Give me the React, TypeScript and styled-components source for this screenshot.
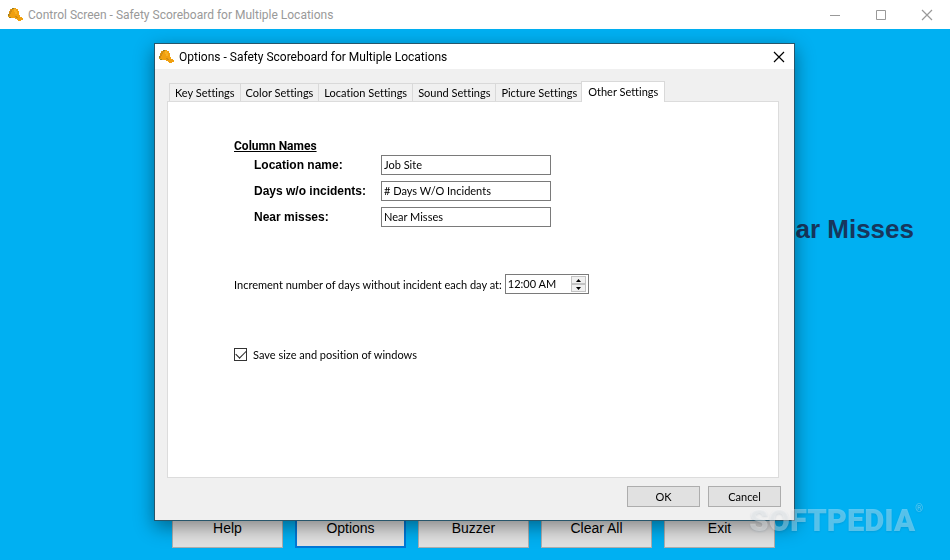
import React, { useState } from "react";
import styled, { createGlobalStyle } from "styled-components";

const GlobalStyle = createGlobalStyle`
  * { box-sizing: border-box; }
  html, body { margin: 0; height: 100%; overflow: hidden; }
  body {
    font-family: Lato, "Liberation Sans", Arial, sans-serif;
    font-size: 11px;
    font-variant-ligatures: none;
    color: #000;
  }
  button, input { font: inherit; font-variant-ligatures: none; color: inherit; margin: 0; }
  h1, h2, h3 { margin: 0; font-weight: 400; }
`;

const MainWindow = styled.div`
  min-height: 100vh;
  display: flex;
  flex-direction: column;
  background: #00b0f2;
`;

const TitleBar = styled.header<{ $main?: boolean }>`
  display: flex;
  align-items: center;
  flex: none;
  height: ${(p) => (p.$main ? 29 : 25)}px;
  padding-left: ${(p) => (p.$main ? 8 : 4)}px;
  gap: 5px;
  background: #fff;
  color: ${(p) => (p.$main ? "#999" : "#000")};
`;

const Title = styled.h1`
  flex: 1;
  font-family: Roboto, "Segoe UI", sans-serif;
  font-size: 12px;
  line-height: 16px;
  white-space: nowrap;
`;

const CaptionButtons = styled.div`
  display: flex;
`;

const CaptionButton = styled.button<{ $wide?: boolean }>`
  width: ${(p) => (p.$wide ? 46 : 31)}px;
  height: 24px;
  padding: 0;
  display: grid;
  place-items: center;
  border: 0;
  background: transparent;
`;

const Board = styled.main`
  flex: 1;
  display: flex;
  flex-direction: column;
  justify-content: space-between;
  padding: 185px 36px 12px;
`;

const BoardHeading = styled.h2`
  text-align: right;
  font-family: "Liberation Sans", Arial, sans-serif;
  font-size: 26px;
  line-height: 30px;
  font-weight: 700;
  color: #17365d;
`;

const ActionBar = styled.nav`
  display: flex;
  justify-content: center;
  gap: 12px;
  padding-right: 3px;
`;

const ActionButton = styled.button<{ $active?: boolean }>`
  width: 111px;
  height: 40px;
  padding: 0;
  font-family: "Liberation Sans", Arial, sans-serif;
  font-size: 14px;
  background: #e1e1e1;
  border: ${(p) => (p.$active ? "2px solid #0078d7" : "1px solid #adadad")};
`;

const Overlay = styled.div`
  position: fixed;
  inset: 0;
  display: flex;
  justify-content: center;
  align-items: flex-start;
  padding: 43px 1px 0 0;
`;

const Dialog = styled.section`
  width: 641px;
  max-width: 100%;
  border: 1px solid #27566b;
  background: #f0f0f0;
  box-shadow: 0 6px 18px rgba(0, 0, 0, 0.42);
`;

const DialogBody = styled.div`
  padding: 11px 15px 0 12px;
`;

const TabList = styled.div`
  display: flex;
  align-items: flex-end;
  padding-left: 2px;
  height: 21px;
`;

const Tab = styled.button<{ $selected: boolean }>`
  height: ${(p) => (p.$selected ? 21 : 18)}px;
  margin: ${(p) => (p.$selected ? "0 0 -1px -2px" : "0")};
  padding: ${(p) => (p.$selected ? "0 6px 2px" : "0 5px")};
  border: 1px solid #d9d9d9;
  border-left-width: ${(p) => (p.$selected ? 1 : 0)}px;
  border-bottom: 0;
  background: ${(p) => (p.$selected ? "#fff" : "#f0f0f0")};
  white-space: nowrap;
  &:first-child { border-left-width: 1px; }
`;

const TabPanel = styled.div`
  height: 377px;
  padding: 36px 66px 0;
  border: 1px solid #dcdcdc;
  background: #fff;
`;

const GroupTitle = styled.h3`
  font-family: Roboto, sans-serif;
  font-size: 12px;
  line-height: 17px;
  font-weight: 700;
  text-decoration: underline;
`;

const FieldGrid = styled.div`
  display: grid;
  grid-template-columns: 127px 170px;
  row-gap: 6px;
  padding-left: 20px;
`;

const FieldLabel = styled.label`
  font-family: "Liberation Sans", Arial, sans-serif;
  font-size: 12px;
  font-weight: 700;
  line-height: 20px;
  white-space: nowrap;
`;

const TextBox = styled.input`
  width: 100%;
  height: 20px;
  padding: 0 2px 2px;
  border: 1px solid #7a7a7a;
  border-radius: 0;
  background: #fff;
  outline: none;
`;

const TimeRow = styled.div`
  display: flex;
  align-items: center;
  gap: 3px;
  margin-top: 47px;
`;

const TimeBox = styled.div`
  display: flex;
  align-items: center;
  width: 84px;
  height: 20px;
  padding-right: 2px;
  border: 1px solid #7a7a7a;
`;

const TimeInput = styled.input`
  flex: 1;
  min-width: 0;
  height: 18px;
  padding: 0 2px 2px;
  border: 0;
  outline: none;
`;

const Spinner = styled.div`
  display: flex;
  flex-direction: column;
`;

const SpinButton = styled.button`
  display: grid;
  place-items: center;
  width: 15px;
  height: 8px;
  padding: 0;
  border: 1px solid #c3c3c3;
  background: #f0f0f0;
`;

const CheckRow = styled.label`
  display: flex;
  align-items: center;
  gap: 6px;
  width: max-content;
  margin-top: 52px;
  line-height: 17px;
`;

const CheckBox = styled.input`
  appearance: none;
  width: 13px;
  height: 13px;
  border: 1px solid #333;
  background: #fff;
  display: grid;
  place-items: center;
  &:checked::after {
    content: "";
    width: 9px;
    height: 5px;
    margin-bottom: 3px;
    border-left: 1px solid #222;
    border-bottom: 1px solid #222;
    transform: rotate(-45deg);
  }
`;

const DialogFooter = styled.footer`
  display: flex;
  justify-content: flex-end;
  gap: 8px;
  padding: 8px 13px 13px;
`;

const PushButton = styled.button`
  width: 73px;
  height: 21px;
  padding: 0;
  border: 1px solid #adadad;
  background: #e1e1e1;
`;

const Watermark = styled.div`
  position: fixed;
  right: 27px;
  bottom: 20px;
  display: flex;
  align-items: flex-start;
  font-family: Roboto, sans-serif;
  font-weight: 900;
  font-size: 31px;
  line-height: 38px;
  color: rgba(255, 255, 255, 0.34);
  text-shadow: 0 1px 2px rgba(0, 50, 80, 0.12);
  pointer-events: none;
`;

const Registered = styled.span`
  font-size: 10px;
  font-weight: 400;
  line-height: 14px;
`;

const HelmetIcon = () => (
  <svg width="15" height="13" viewBox="0 0 15 13" shapeRendering="crispEdges" aria-hidden="true">
    <path d="M4 0h4v1h2v2h1v4h1v2h2v1h1v2h-2v1h-3v-1H9v-1H7v-1H1V9H0V6h1V3h1V1h2z" fill="#f0a010" />
    <path d="M3 1h2v1H4v2H3v2H2v2H1V4h1V2h1zM7 8h2v1h1v1H8V9H7z" fill="#d08c14" />
    <path d="M6 1h2v2h1v3H7V4H6z" fill="#f8b022" />
    <path d="M4 0h2v1H4zM1 9h2v1H1zM0 6h1v2H0z" fill="#968322" />
  </svg>
);

const CloseIcon = () => (
  <svg width="12" height="12" viewBox="0 0 12 12" stroke="currentColor" strokeWidth="1.2" fill="none" aria-hidden="true">
    <path d="M1 1l10 10M11 1L1 11" />
  </svg>
);

const tabs = [
  "Key Settings",
  "Color Settings",
  "Location Settings",
  "Sound Settings",
  "Picture Settings",
  "Other Settings",
];

const fields = [
  { id: "location", label: "Location name:", value: "Job Site" },
  { id: "days", label: "Days w/o incidents:", value: "# Days W/O Incidents" },
  { id: "misses", label: "Near misses:", value: "Near Misses" },
];

const actions = ["Help", "Options", "Buzzer", "Clear All", "Exit"];

export default function App() {
  const [selected, setSelected] = useState("Other Settings");

  return (
    <>
      <GlobalStyle />
      <MainWindow>
        <TitleBar $main>
          <HelmetIcon />
          <Title>Control Screen - Safety Scoreboard for Multiple Locations</Title>
          <CaptionButtons>
            <CaptionButton $wide aria-label="Minimize">
              <svg width="10" height="10" stroke="currentColor" aria-hidden="true"><path d="M0 5.5h10" /></svg>
            </CaptionButton>
            <CaptionButton $wide aria-label="Maximize">
              <svg width="10" height="10" stroke="currentColor" fill="none" aria-hidden="true"><path d="M.5.5h9v9h-9z" /></svg>
            </CaptionButton>
            <CaptionButton $wide aria-label="Close"><CloseIcon /></CaptionButton>
          </CaptionButtons>
        </TitleBar>
        <Board>
          <BoardHeading>Near Misses</BoardHeading>
          <ActionBar>
            {actions.map((name) => (
              <ActionButton key={name} $active={name === "Options"}>{name}</ActionButton>
            ))}
          </ActionBar>
        </Board>
      </MainWindow>

      <Overlay>
        <Dialog role="dialog" aria-labelledby="options-title">
          <TitleBar>
            <HelmetIcon />
            <Title id="options-title">Options - Safety Scoreboard for Multiple Locations</Title>
            <CaptionButton aria-label="Close"><CloseIcon /></CaptionButton>
          </TitleBar>
          <DialogBody>
            <TabList role="tablist">
              {tabs.map((name) => (
                <Tab
                  key={name}
                  role="tab"
                  aria-selected={name === selected}
                  $selected={name === selected}
                  onClick={() => setSelected(name)}
                >
                  {name}
                </Tab>
              ))}
            </TabList>
            <TabPanel role="tabpanel">
              <GroupTitle>Column Names</GroupTitle>
              <FieldGrid>
                {fields.map((f) => (
                  <React.Fragment key={f.id}>
                    <FieldLabel htmlFor={f.id}>{f.label}</FieldLabel>
                    <TextBox id={f.id} defaultValue={f.value} />
                  </React.Fragment>
                ))}
              </FieldGrid>
              <TimeRow>
                <label htmlFor="time">Increment number of days without incident each day at:</label>
                <TimeBox>
                  <TimeInput id="time" defaultValue="12:00 AM" />
                  <Spinner>
                    <SpinButton aria-label="Later">
                      <svg width="5" height="3" aria-hidden="true"><path d="M0 3h5L2.5 0z" /></svg>
                    </SpinButton>
                    <SpinButton aria-label="Earlier">
                      <svg width="5" height="3" aria-hidden="true"><path d="M0 0h5L2.5 3z" /></svg>
                    </SpinButton>
                  </Spinner>
                </TimeBox>
              </TimeRow>
              <CheckRow>
                <CheckBox type="checkbox" defaultChecked />
                Save size and position of windows
              </CheckRow>
            </TabPanel>
          </DialogBody>
          <DialogFooter>
            <PushButton>OK</PushButton>
            <PushButton>Cancel</PushButton>
          </DialogFooter>
        </Dialog>
      </Overlay>
      <Watermark aria-hidden="true">
        SOFTPEDIA<Registered>®</Registered>
      </Watermark>
    </>
  );
}
